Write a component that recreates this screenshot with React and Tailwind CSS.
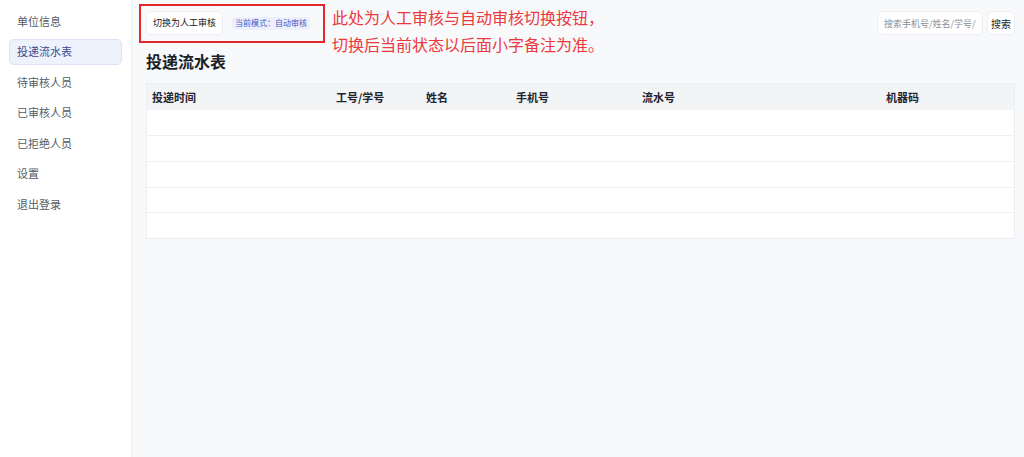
import React, { useState } from 'react';

const menu = ['单位信息', '投递流水表', '待审核人员', '已审核人员', '已拒绝人员', '设置', '退出登录'];

const columns = [
  { title: '投递时间', w: 'w-[184px]' },
  { title: '工号/学号', w: 'w-[90px]' },
  { title: '姓名', w: 'w-[90px]' },
  { title: '手机号', w: 'w-[126px]' },
  { title: '流水号', w: 'w-[244px]' },
  { title: '机器码', w: '' },
];

const rows = [1, 2, 3, 4, 5];

export default function App() {
  const [active, setActive] = useState('投递流水表');
  const [mode, setMode] = useState('自动审核');
  const [keyword, setKeyword] = useState('');

  const font = { fontFamily: '"Noto Sans CJK SC", "Noto Sans", sans-serif' };

  return (
    <div className="flex h-[457px] w-full bg-[#f8f9fb]" style={font}>
      {/* sidebar */}
      <aside className="w-[132px] shrink-0 bg-white border-r border-[#eceef2] pt-[8px] px-[9px] flex flex-col gap-[4.5px]">
        {menu.map((item) => (
          <div
            key={item}
            onClick={() => setActive(item)}
            className={
              item === active
                ? 'h-[26px] flex items-center px-[7px] rounded-[5px] border border-[#dce3f8] bg-[#eef2fd] text-[11px] text-[#3d4b8c] cursor-pointer'
                : 'h-[26px] flex items-center px-[8px] text-[11px] text-[#555b66] cursor-pointer'
            }
          >
            {item}
          </div>
        ))}
      </aside>

      {/* main */}
      <main className="flex-1 pl-[14px] pr-[9px] pt-[11px]">
        <div className="flex items-start justify-between">
          <div className="relative">
            <div className="flex items-center gap-[9px]">
              <button
                onClick={() => setMode(mode === '自动审核' ? '人工审核' : '自动审核')}
                className="h-[24px] px-[6px] rounded-[5px] bg-white border border-[#eceef2] text-[9px] text-[#222]"
              >
                切换为{mode === '自动审核' ? '人工审核' : '自动审核'}
              </button>
              <span className="h-[13px] px-[3px] flex items-center rounded-[3px] bg-[#eceffc] text-[8px] leading-none text-[#4a58c4]">
                当前模式：{mode}
              </span>
            </div>
            {/* annotation frame */}
            <div className="absolute -left-[7px] -top-[7px] -right-[15px] -bottom-[8px] border-2 border-[#e3262c] pointer-events-none" />
            <div className="absolute left-[calc(100%+22px)] -top-[7px] whitespace-nowrap text-[16px] leading-[27px] text-[#ea3a3f]">
              <div>此处为人工审核与自动审核切换按钮，</div>
              <div>切换后当前状态以后面小字备注为准。</div>
            </div>
          </div>

          <div className="flex items-center gap-[4px]">
            <input
              value={keyword}
              onChange={(e) => setKeyword(e.target.value)}
              placeholder="搜索手机号/姓名/学号/流水号"
              className="h-[24px] w-[106px] px-[6px] rounded-[5px] bg-white border border-[#eceef2] text-[9px] text-[#333] placeholder:text-[#8a8f99] outline-none"
            />
            <button className="h-[24px] px-[3px] rounded-[5px] bg-white border border-[#eceef2] text-[10px] text-[#222]">
              搜索
            </button>
          </div>
        </div>

        <h1 className="mt-[14px] mb-[10px] text-[16px] leading-[24px] font-bold text-[#1b1f27]">投递流水表</h1>

        <div className="bg-white border border-[#eceef2]">
          <table className="w-full border-collapse table-fixed">
            <thead>
              <tr className="bg-[#f3f4f6] h-[26px]">
                {columns.map((c) => (
                  <th key={c.title} className={`${c.w} px-[5px] text-left text-[11px] font-bold text-[#1f2430]`}>
                    {c.title}
                  </th>
                ))}
              </tr>
            </thead>
            <tbody>
              {rows.map((r) => (
                <tr key={r} className="h-[25.7px] border-b border-[#eef0f3] last:border-b-0">
                  {columns.map((c) => (
                    <td key={c.title} className="px-[5px]" />
                  ))}
                </tr>
              ))}
            </tbody>
          </table>
        </div>
      </main>
    </div>
  );
}
